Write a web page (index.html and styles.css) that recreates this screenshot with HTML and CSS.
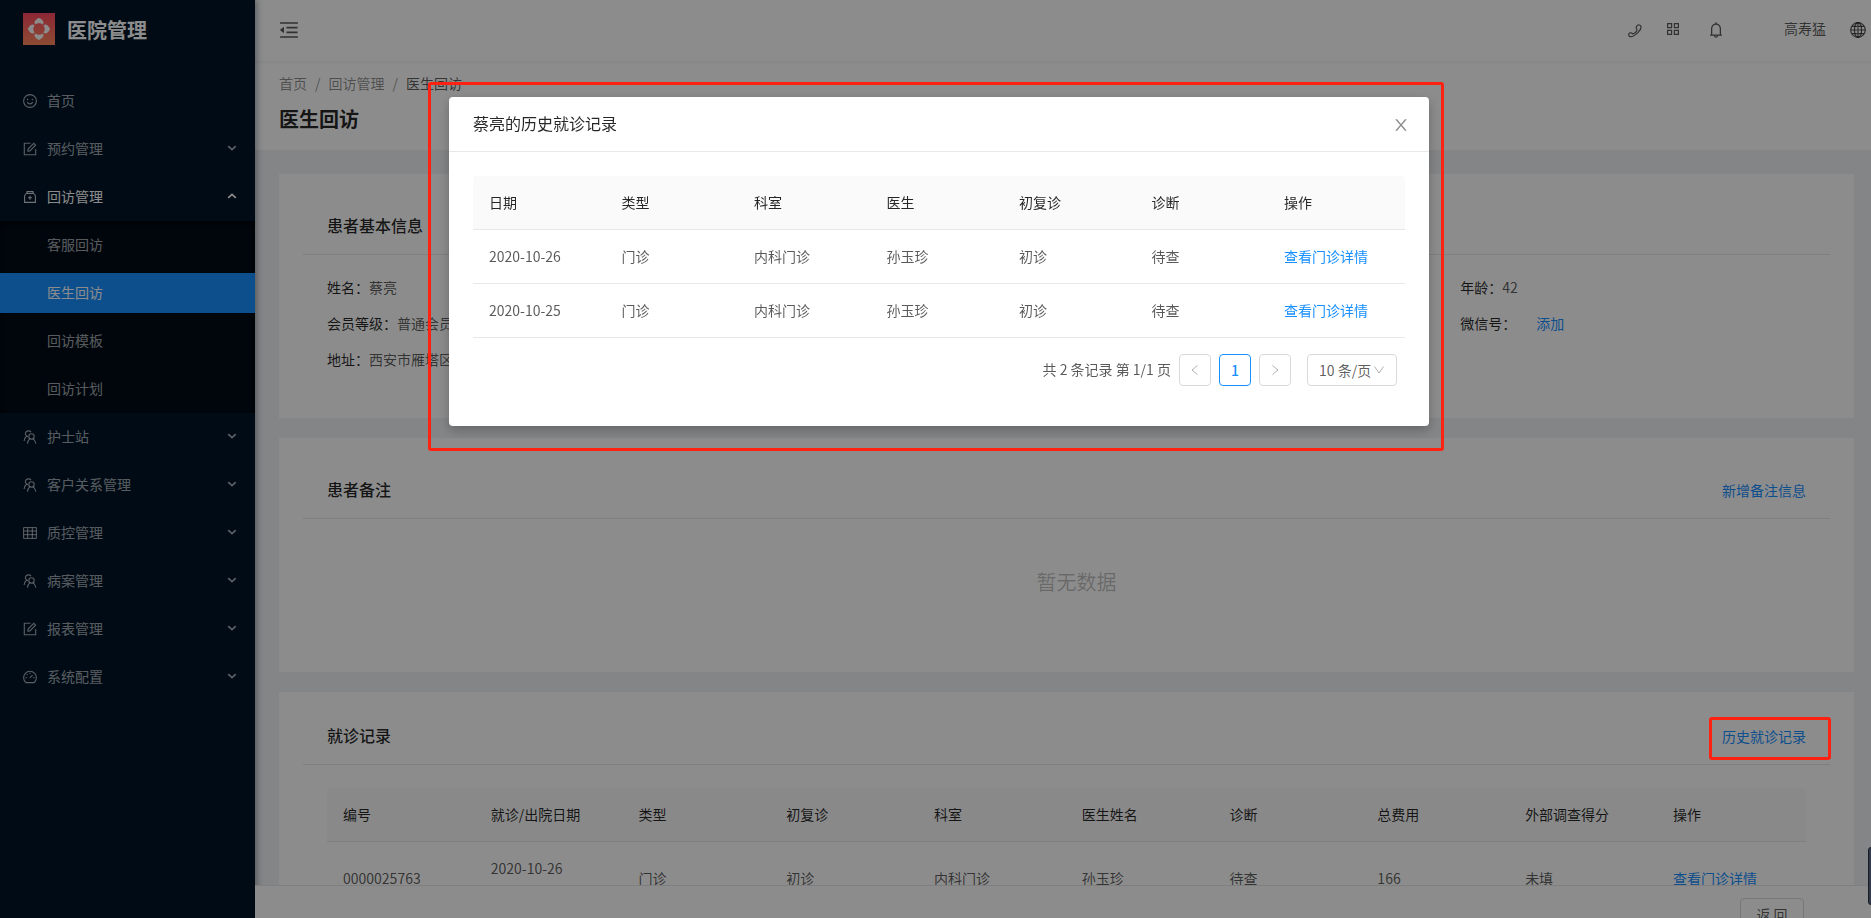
FILE: index.html
```html
<!DOCTYPE html>
<html lang="zh-CN">
<head>
  <meta charset="UTF-8" />
  <meta name="viewport" content="width=device-width, initial-scale=1.0" />
  <title>医生回访</title>
  <link rel="stylesheet" href="styles.css">
</head>
<body>
  <!-- shared icons -->
  <svg class="sprite" aria-hidden="true">
    <symbol id="i-down" viewBox="0 0 10 10"><path d="M1.2 3.2L5 6.6l3.8-3.4" fill="none" stroke="currentColor" stroke-width="1.7" /></symbol>
    <symbol id="i-smile" viewBox="0 0 14 14"><g fill="none" stroke="currentColor" stroke-width="1.1"><circle cx="7" cy="7" r="6.4" /><path d="M4.4 7.8c.3 1.4 1.3 2.1 2.6 2.1s2.300-.7 2.600-2.100" /></g><circle cx="4.600" cy="5.500" r=".8" fill="currentColor" /><circle cx="9.400" cy="5.500" r=".8" fill="currentColor" /></symbol>
    <symbol id="i-form" viewBox="0 0 14 14"><g fill="none" stroke="currentColor" stroke-width="1.1"><path d="M7.500 1.300H1.300v11.400h11.400V7" /><path d="M4.900 9.100l.2-2 5.700-5.700 1.800 1.800-5.700 5.700z" /></g></symbol>
    <symbol id="i-case" viewBox="0 0 14 14"><g fill="none" stroke="currentColor" stroke-width="1.1"><path d="M4 1.500h6v1.700H4zM3.500 3.400h7c1 .6 1.900 1.600 1.900 3v6H1.600v-6c0-1.400.9-2.400 1.900-3z" /><path d="M7 5.800v4M5 7.800h4" /></g></symbol>
    <symbol id="i-team" viewBox="0 0 14 14"><g fill="none" stroke="currentColor" stroke-width="1.1"><circle cx="8.500" cy="6.400" r="2.700" /><path d="M4.500 13.600c.2-2.300 1-3.800 2.400-5M10 8.700c1.500 1 2.500 2.500 2.800 4.900" /><path d="M5 6.700C2.800 6.200 1.900 4.300 2.600 2.600 3.500.5 6.600.2 8 2.100M3.400 6.500C1.900 7.500 1.200 9 1.100 11" /></g></symbol>
    <symbol id="i-table" viewBox="0 0 14 14"><path d="M.6 1.600h12.800v10.800H.6zM.6 5h12.800M.6 8.700h12.800M4.700 1.600v10.800M9.300 1.600v10.800" fill="none" stroke="currentColor" /></symbol>
    <symbol id="i-dash" viewBox="0 0 14 14"><g fill="none" stroke="currentColor" stroke-width="1.1"><path d="M2.900 12.600a6.400 6.400 0 1 1 8.200 0z" /><path d="M6.800 7.900l2.800-2.800M2.500 7.600h1.200M10.300 7.600h1.200M7 2.800v1.200M3.700 4.300l.8.800" /></g></symbol>
  </svg>

  <div class="layout">
    <aside class="sider">
      <div class="logo">
        <svg class="logo-mark" viewBox="0 0 32 32">
          <defs><linearGradient id="lg" x1="0" y1="0" x2="0" y2="1"><stop offset="0" stop-color="#ff4761" /><stop offset="1" stop-color="#ff8a5e" /></linearGradient></defs>
          <rect width="32" height="32" fill="url(#lg)" />
          <g fill="#fff">
            <path id="petal" d="M16 5c1.500.2 4.500 2.800 4.500 4.400 0 .9-.3 1.600-1 2.200-.8-.8-2-1.300-3.500-1.300s-2.700.5-3.500 1.300c-.7-.6-1-1.300-1-2.200C11.500 7.800 14.500 5.200 16 5z" />
            <use href="#petal" transform="rotate(90 16 16)" />
            <use href="#petal" transform="rotate(180 16 16)" />
            <use href="#petal" transform="rotate(270 16 16)" />
          </g>
        </svg>
        <h1>医院管理</h1>
      </div>
      <ul class="menu">
        <li><a href="#"><svg class="icon"><use href="#i-smile" /></svg>首页</a></li>
        <li><a href="#"><svg class="icon"><use href="#i-form" /></svg>预约管理<svg class="arrow"><use href="#i-down" /></svg></a></li>
        <li class="open">
          <a href="#"><svg class="icon"><use href="#i-case" /></svg>回访管理<svg class="arrow"><use href="#i-down" /></svg></a>
          <ul class="submenu">
            <li><a href="#">客服回访</a></li>
            <li><a href="#" class="selected">医生回访</a></li>
            <li><a href="#">回访模板</a></li>
            <li><a href="#">回访计划</a></li>
          </ul>
        </li>
        <li><a href="#"><svg class="icon"><use href="#i-team" /></svg>护士站<svg class="arrow"><use href="#i-down" /></svg></a></li>
        <li><a href="#"><svg class="icon"><use href="#i-team" /></svg>客户关系管理<svg class="arrow"><use href="#i-down" /></svg></a></li>
        <li><a href="#"><svg class="icon"><use href="#i-table" /></svg>质控管理<svg class="arrow"><use href="#i-down" /></svg></a></li>
        <li><a href="#"><svg class="icon"><use href="#i-team" /></svg>病案管理<svg class="arrow"><use href="#i-down" /></svg></a></li>
        <li><a href="#"><svg class="icon"><use href="#i-form" /></svg>报表管理<svg class="arrow"><use href="#i-down" /></svg></a></li>
        <li><a href="#"><svg class="icon"><use href="#i-dash" /></svg>系统配置<svg class="arrow"><use href="#i-down" /></svg></a></li>
      </ul>
    </aside>

    <div class="main">
      <header class="header">
        <button class="icon-btn fold" aria-label="收起菜单">
          <svg width="20" height="20" viewBox="64 64 896 896"><path fill="currentColor" d="M408 442h480c4.400 0 8-3.600 8-8v-56c0-4.400-3.600-8-8-8H408c-4.400 0-8 3.600-8 8v56c0 4.400 3.600 8 8 8zm-8 204c0 4.400 3.600 8 8 8h480c4.400 0 8-3.600 8-8v-56c0-4.400-3.600-8-8-8H408c-4.400 0-8 3.600-8 8v56zm504-486H120c-4.400 0-8 3.600-8 8v56c0 4.400 3.600 8 8 8h784c4.400 0 8-3.600 8-8v-56c0-4.400-3.600-8-8-8zm0 632H120c-4.400 0-8 3.600-8 8v56c0 4.400 3.600 8 8 8h784c4.400 0 8-3.600 8-8v-56c0-4.400-3.600-8-8-8zM115.400 518.900L271.700 642c5.800 4.600 14.400.5 14.400-6.900V388.900c0-7.400-8.500-11.500-14.400-6.900L115.400 505.100a8.740 8.740 0 0 0 0 13.800z" /></svg>
        </button>
        <div class="header-right">
          <button class="icon-btn phone" aria-label="电话">
            <svg width="14" height="14" viewBox="0 0 14 14"><path fill="none" stroke="currentColor" stroke-width="1.2" d="M9.700 1.200c.9-.6 2.500-.2 3.100.9.600 1.200-.2 3.500-2.300 5.700-2.500 2.700-5.800 5.100-8.200 4.900-1.300-.1-1.900-1.500-1.500-2.600.4-1.200 2.400-1.700 3.300-.9.500.4.700.8 1.300.6 1.300-.5 3-2.300 3.600-3.600.2-.6-.2-.8-.5-1.400-.5-1.200.1-2.900 1.200-3.600z" /></svg>
          </button>
          <button class="icon-btn apps" aria-label="应用">
            <svg width="14" height="14" viewBox="0 0 14 14"><path fill="none" stroke="currentColor" stroke-width="1.2" d="M1.600 1.600h4v4h-4zM8.400 1.600h4v4h-4zM1.600 8.400h4v4h-4zM8.400 8.400h4v4h-4z" /></svg>
          </button>
          <button class="icon-btn bell" aria-label="通知">
            <svg width="16" height="16" viewBox="64 64 896 896"><path fill="currentColor" d="M816 768h-24V428c0-141.100-104.300-257.700-240-277.100V112c0-22.100-17.900-40-40-40s-40 17.900-40 40v38.900c-135.700 19.400-240 136-240 277.100v340h-24c-17.700 0-32 14.300-32 32v32c0 4.400 3.600 8 8 8h216c0 61.800 50.200 112 112 112s112-50.200 112-112h216c4.400 0 8-3.600 8-8v-32c0-17.700-14.300-32-32-32zM512 888c-26.500 0-48-21.500-48-48h96c0 26.500-21.500 48-48 48zM304 768V428c0-55.600 21.600-107.800 60.900-147.100S456.400 220 512 220c55.600 0 107.800 21.600 147.100 60.900S720 372.400 720 428v340H304z" /></svg>
          </button>
          <span class="user">高寿猛</span>
          <button class="icon-btn" aria-label="语言">
            <svg width="16" height="16" viewBox="0 0 16 16"><g fill="none" stroke="currentColor" stroke-width="1.2"><circle cx="8" cy="8" r="7.300" /><ellipse cx="8" cy="8" rx="3.600" ry="7.300" /><path d="M8 .7v14.600M.7 8h14.600M1.800 4.400h12.400M1.800 11.600h12.400" /></g></svg>
          </button>
        </div>
      </header>

      <div class="page-head">
        <nav class="breadcrumb"><a href="#">首页</a><span class="sep">/</span><a href="#">回访管理</a><span class="sep">/</span><span class="current">医生回访</span></nav>
        <h2>医生回访</h2>
      </div>

      <main class="content">
        <section class="card card-info">
          <div class="card-head"><h3>患者基本信息</h3></div>
          <div class="info">
            <div><b>姓名：</b>蔡亮</div>
            <div class="last"><b>年龄：</b>42</div>
            <div><b>会员等级：</b>普通会员</div>
            <div class="last"><b>微信号：</b><a class="add" href="#">添加</a></div>
            <div><b>地址：</b>西安市雁塔区</div>
          </div>
        </section>

        <section class="card card-note">
          <div class="card-head"><h3>患者备注</h3><a href="#">新增备注信息</a></div>
          <p class="empty">暂无数据</p>
        </section>

        <section class="card card-record">
          <div class="card-head"><h3>就诊记录</h3><a href="#">历史就诊记录</a></div>
          <div class="table-wrap">
            <table class="table">
              <thead>
                <tr><th>编号</th><th>就诊/出院日期</th><th>类型</th><th>初复诊</th><th>科室</th><th>医生姓名</th><th>诊断</th><th>总费用</th><th>外部调查得分</th><th class="action">操作</th></tr>
              </thead>
              <tbody>
                <tr><td>0000025763</td><td>2020-10-26<br>&nbsp;</td><td>门诊</td><td>初诊</td><td>内科门诊</td><td>孙玉珍</td><td>待查</td><td>166</td><td>未填</td><td><a href="#">查看门诊详情</a></td></tr>
              </tbody>
            </table>
          </div>
        </section>
      </main>

      <footer class="footer"><button class="back">返 回</button></footer>
    </div>
  </div>

  <div class="side-handle"></div>
  <div class="mask"></div>

  <div class="modal-wrap">
    <div class="modal" role="dialog" aria-labelledby="modalTitle">
      <div class="modal-head">
        <h3 id="modalTitle">蔡亮的历史就诊记录</h3>
        <button class="icon-btn close" aria-label="关闭">
          <svg width="16" height="16" viewBox="64 64 896 896"><path fill="currentColor" d="M563.800 512l262.500-312.900c4.400-5.200.7-13.100-6.100-13.100h-79.800c-4.700 0-9.200 2.100-12.300 5.700L511.600 449.800 295.100 191.700c-3-3.600-7.500-5.700-12.300-5.700H203c-6.800 0-10.500 7.900-6.100 13.100L459.400 512 196.900 824.900A7.950 7.950 0 0 0 203 838h79.800c4.700 0 9.200-2.100 12.300-5.700l216.500-258.100 216.500 258.100c3 3.600 7.500 5.700 12.300 5.700h79.800c6.800 0 10.500-7.900 6.100-13.100L563.800 512z" /></svg>
        </button>
      </div>
      <div class="modal-body">
        <table class="table">
          <thead>
            <tr><th>日期</th><th>类型</th><th>科室</th><th>医生</th><th>初复诊</th><th>诊断</th><th class="action">操作</th></tr>
          </thead>
          <tbody>
            <tr><td>2020-10-26</td><td>门诊</td><td>内科门诊</td><td>孙玉珍</td><td>初诊</td><td>待查</td><td><a href="#">查看门诊详情</a></td></tr>
            <tr><td>2020-10-25</td><td>门诊</td><td>内科门诊</td><td>孙玉珍</td><td>初诊</td><td>待查</td><td><a href="#">查看门诊详情</a></td></tr>
          </tbody>
        </table>
        <div class="pagination">
          <span class="total">共 2 条记录 第 1/1 页</span>
          <button disabled aria-label="上一页"><svg width="12" height="12" viewBox="0 0 12 12"><path d="M8.500 1.500L3 6l5.500 4.500" fill="none" stroke="currentColor" /></svg></button>
          <button class="active">1</button>
          <button disabled aria-label="下一页"><svg width="12" height="12" viewBox="0 0 12 12"><path d="M3.500 1.500L9 6l-5.500 4.500" fill="none" stroke="currentColor" /></svg></button>
          <div class="size">
            <select aria-label="每页条数"><option>10 条/页</option></select>
            <svg width="12" height="12" viewBox="0 0 12 12"><path d="M1.500 2.500L6 9l4.500-6.500" fill="none" stroke="currentColor" /></svg>
          </div>
        </div>
      </div>
      <div class="marker marker-modal"></div>
    </div>
  </div>
  <div class="marker marker-link"></div>
</body>
</html>
```
FILE: styles.css
```css
* {
  box-sizing: border-box;
}
body {
  margin: 0;
  font-family: "Noto Sans CJK SC", "Microsoft YaHei", sans-serif;
  font-size: 14px;
  line-height: 21px;
  color: rgba(0, 0, 0, 0.65);
  overflow: hidden;
}
h1, h2, h3, p, ul {
  margin: 0;
  padding: 0;
}
ul {
  list-style: none;
}
a {
  color: #1890ff;
  text-decoration: none;
}
button {
  font-family: inherit;
  font-size: 14px;
  color: inherit;
  cursor: pointer;
}
svg {
  display: block;
}
.sprite {
  position: absolute;
  width: 0;
  height: 0;
}
.layout {
  display: flex;
  height: 100vh;
}

/* sidebar */
.sider {
  position: relative;
  z-index: 2;
  flex: 0 0 255px;
  background-color: #001529;
  box-shadow: 2px 0 6px rgba(0, 21, 41, 0.35);
}
.logo {
  display: flex;
  align-items: center;
  gap: 12px;
  height: 61px;
  padding: 0 23px 3px;
}
.logo-mark {
  width: 32px;
  height: 32px;
}
.logo h1 {
  padding-top: 2px;
  font-size: 20px;
  line-height: 32px;
  font-weight: 700;
  color: #fff;
}
.menu {
  padding: 16px 0;
}
.menu a {
  display: flex;
  align-items: center;
  gap: 10px;
  height: 40px;
  margin: 4px 0;
  padding: 0 18px 2px 23px;
  color: rgba(255, 255, 255, 0.65);
}
.menu li {
  display: flow-root;
}
.icon {
  width: 14px;
  height: 14px;
  margin-top: 2px;
}
.arrow {
  width: 10px;
  height: 10px;
  margin-left: auto;
}
.open > a {
  color: #fff;
}
.open > a .icon {
  color: rgba(255, 255, 255, 0.8);
}
.open > a .arrow {
  transform: rotate(180deg);
}
.submenu {
  background-color: #000c17;
  box-shadow: inset 0 2px 8px rgba(0, 0, 0, 0.45);
}
.submenu a {
  padding-left: 47px;
}
.submenu a.selected {
  background-color: #1890ff;
  color: #fff;
}

/* top bar */
.main {
  flex: 1;
  min-width: 0;
  display: flex;
  flex-direction: column;
  background-color: #f0f2f5;
}
.header {
  position: relative;
  flex: none;
  display: flex;
  align-items: center;
  justify-content: space-between;
  height: 61px;
  padding: 0 5px 1px 24px;
  background-color: #fff;
  box-shadow: 0 1px 4px rgba(0, 21, 41, 0.08);
}
.icon-btn {
  padding: 0;
  border: none;
  background: none;
}
.header-right {
  display: flex;
  align-items: center;
}
.phone {
  margin-right: 24px;
  padding-top: 2px;
}
.apps {
  margin-right: 28px;
  padding-bottom: 2px;
}
.bell {
  margin-right: 60px;
}
.user {
  margin-right: 24px;
  padding-bottom: 4px;
}
.page-head {
  flex: none;
  height: 89px;
  padding: 12px 24px;
  background-color: #fff;
}
.breadcrumb {
  display: flex;
  gap: 8px;
}
.breadcrumb a, .sep {
  color: rgba(0, 0, 0, 0.45);
}
.page-head h2 {
  margin-top: 9px;
  font-size: 20px;
  line-height: 32px;
  font-weight: 700;
  color: rgba(0, 0, 0, 0.85);
}

/* content */
.content {
  flex: 1;
  min-height: 0;
  overflow: hidden;
  padding: 24px 17px 0 24px;
}
.card {
  margin-bottom: 20px;
  padding: 24px 24px 0;
  background-color: #fff;
}
.card-info {
  height: 244px;
}
.card-note {
  height: 234px;
}
.card-record {
  height: 260px;
  padding-top: 16px;
}
.card-head {
  display: flex;
  align-items: center;
  justify-content: space-between;
  height: 57px;
  padding: 0 24px;
  border-bottom: 1px solid #e8e8e8;
}
.card-head h3 {
  padding-bottom: 2px;
  font-size: 16px;
  line-height: 24px;
  font-weight: 500;
  color: rgba(0, 0, 0, 0.85);
}
.info {
  display: grid;
  grid-template-columns: repeat(4, 1fr);
  gap: 15px 32px;
  padding: 22px 24px;
}
.info > div {
  grid-column: 1;
}
.info > .last {
  grid-column: 4;
}
.info > div:nth-child(-n+2) {
  grid-row: 1;
}
.info > div:nth-child(n+3) {
  grid-row: 2;
}
.info > div:last-child {
  grid-row: 3;
}
.info b {
  font-weight: 400;
  color: rgba(0, 0, 0, 0.85);
}
.add {
  margin-left: 20px;
}
.empty {
  padding: 47px 0 0 20px;
  font-size: 20px;
  line-height: 32px;
  text-align: center;
  color: rgba(0, 0, 0, 0.25);
}
.table-wrap {
  padding: 23px 24px 0;
}
.table {
  width: 100%;
  table-layout: fixed;
  border-collapse: separate;
  border-spacing: 0;
}
.table th, .table td {
  padding: 16px;
  text-align: left;
  border-bottom: 1px solid #e8e8e8;
}
.table th {
  font-weight: 400;
  color: rgba(0, 0, 0, 0.85);
  background-color: #fafafa;
}
.table th:first-child {
  border-top-left-radius: 4px;
}
.table th:last-child {
  border-top-right-radius: 4px;
}
.card-record td {
  line-height: 20px;
}
.card-record .action {
  width: 149px;
}
.modal .action {
  width: 137px;
}
.footer {
  position: relative;
  z-index: 3;
  flex: none;
  display: flex;
  justify-content: flex-end;
  height: 33px;
  padding: 12px 67px 0 24px;
  overflow: hidden;
  background-color: #fff;
  border-top: 1px solid #e8e8e8;
}
.back {
  flex: none;
  width: 64px;
  height: 32px;
  padding: 0;
  border: 1px solid #d9d9d9;
  border-radius: 4px;
  background-color: #fff;
}
.side-handle {
  position: fixed;
  right: -4px;
  bottom: 13px;
  width: 7px;
  height: 58px;
  border: 1px solid #2d3340;
  border-radius: 3px;
  background-color: #5d6b8c;
  z-index: 4;
}

/* modal */
.mask {
  position: fixed;
  inset: 0;
  z-index: 10;
  background-color: rgba(0, 0, 0, 0.45);
}
.modal-wrap {
  position: fixed;
  inset: 0;
  z-index: 11;
  padding-top: 97px;
  padding-left: 7px;
}
.modal {
  position: relative;
  width: 980px;
  margin: 0 auto;
  border-radius: 4px;
  background-color: #fff;
  box-shadow: 0 4px 12px rgba(0, 0, 0, 0.25);
}
.modal-head {
  display: flex;
  align-items: center;
  justify-content: space-between;
  height: 55px;
  padding: 0 20px 0 24px;
  border-bottom: 1px solid #e8e8e8;
}
.modal-head h3 {
  padding-bottom: 2px;
  font-size: 16px;
  line-height: 22px;
  font-weight: 400;
  color: rgba(0, 0, 0, 0.85);
}
.close {
  padding-top: 2px;
  color: rgba(0, 0, 0, 0.45);
}
.modal-body {
  padding: 24px 24px 40px;
}
.pagination {
  display: flex;
  align-items: center;
  justify-content: flex-end;
  gap: 8px;
  margin-top: 16px;
  padding-right: 8px;
}
.total {
  padding-bottom: 2px;
}
.pagination button {
  display: flex;
  align-items: center;
  justify-content: center;
  width: 32px;
  height: 32px;
  padding: 0;
  border: 1px solid #d9d9d9;
  border-radius: 4px;
  background-color: #fff;
}
.pagination button:disabled {
  color: rgba(0, 0, 0, 0.3);
}
.pagination .active {
  border-color: #1890ff;
  color: #1890ff;
  font-weight: 500;
}
.size {
  position: relative;
  margin-left: 8px;
}
.size select {
  display: block;
  width: 90px;
  height: 32px;
  padding: 0 11px;
  appearance: none;
  border: 1px solid #d9d9d9;
  border-radius: 4px;
  background-color: #fff;
  font-family: inherit;
  font-size: 14px;
  color: rgba(0, 0, 0, 0.65);
}
.size svg {
  position: absolute;
  right: 12px;
  top: 10px;
  color: rgba(0, 0, 0, 0.3);
  pointer-events: none;
}

/* red highlight boxes */
.marker {
  position: absolute;
  border: 3px solid #ff2212;
  border-radius: 3px;
  pointer-events: none;
  z-index: 12;
}
.marker-modal {
  inset: -15px -15px -25px -21px;
}
.marker-link {
  top: 717px;
  right: 40px;
  width: 122px;
  height: 43px;
}
```
